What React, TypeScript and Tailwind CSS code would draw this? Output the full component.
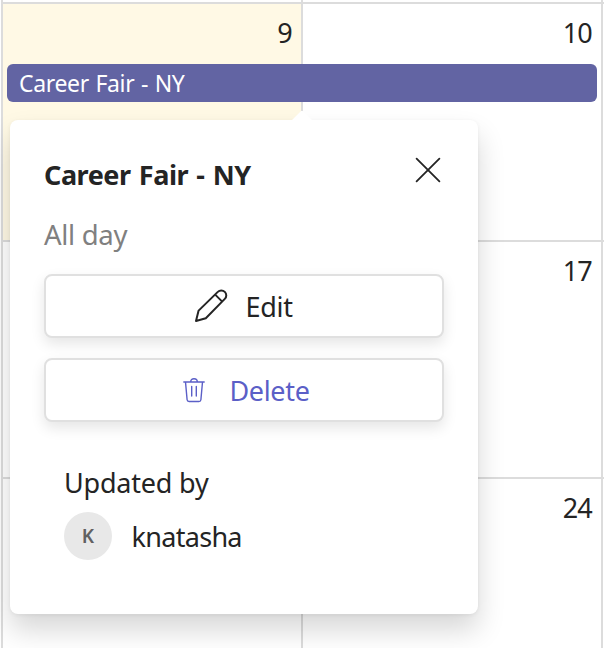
const days = [
  { left: '', right: '', height: 'h-[2px]', today: false },
  { left: '9', right: '10', height: 'h-[238px]', today: true },
  { left: '', right: '17', height: 'h-[237px]', today: false },
  { left: '', right: '24', height: 'h-[171px]', today: false },
];

function DayCell({ label, today, first }: { label: string; today?: boolean; first?: boolean }) {
  return (
    <div
      className={`h-full w-[300px] shrink-0 border-l-2 border-[#dcdcdc] pr-[9px] text-right text-[27px] leading-[58px] tracking-[-0.8px] ${
        first ? '' : 'border-t-2'
      } ${today ? 'bg-[#fff9e5]' : 'bg-white'}`}
    >
      {label}
    </div>
  );
}

function CloseIcon() {
  return (
    <svg width="26" height="26" viewBox="0 0 26 26" fill="none" stroke="#242424" strokeWidth="1.8" strokeLinecap="round">
      <path d="M1.6 1.6 24.4 24.4M24.4 1.6 1.6 24.4" />
    </svg>
  );
}

function PencilIcon() {
  return (
    <svg width="34" height="34" viewBox="0 0 34 34" fill="none" stroke="#242424" strokeWidth="2" strokeLinejoin="round">
      <path d="M2 32 4.6 21.6 23.8 2.9a4.9 4.9 0 0 1 7 0 4.9 4.9 0 0 1 0 7L11.8 29.2Z" />
      <path d="m21.2 5.6 7 7" />
    </svg>
  );
}

function TrashIcon() {
  return (
    <svg width="22" height="26" viewBox="0 0 22 26" fill="none" stroke="#5b5fc7" strokeWidth="1.4" strokeLinecap="round" strokeLinejoin="round">
      <path d="M.8 5H21.2M7.7 4.8C7.7 2.8 9 1.7 11 1.7s3.3 1.1 3.3 3.1M2.5 5l1.6 17.7a2 2 0 0 0 2 1.8h9.8a2 2 0 0 0 2-1.8L19.5 5" />
      <path d="M8.7 9.5V19M13.3 9.5V19" />
    </svg>
  );
}

const buttonClass =
  'flex h-16 w-[400px] items-center rounded-lg border-2 border-[#e0e0e0] bg-white text-[27px] shadow-[0_6px_14px_rgba(0,0,0,0.10)]';

export default function App() {
  return (
    <div className="relative h-[648px] w-[604px] overflow-hidden bg-white font-['Noto_Sans','Open_Sans',sans-serif] text-[#242424]">
      <div className="flex flex-col">
        {days.map((row, i) => (
          <div key={i} className={`flex pl-px ${row.height}`}>
            <DayCell label={row.left} today={row.today} first={i === 0} />
            <DayCell label={row.right} first={i === 0} />
            <DayCell label="" first={i === 0} />
          </div>
        ))}
      </div>

      <div className="absolute left-[7px] top-16 h-[38px] w-[590px] rounded-[6px] bg-[#6264a3] pl-3 text-[23px] leading-[39px] tracking-[-0.35px] [word-spacing:1px] text-white">
        <span>Career Fair - NY</span>
      </div>

      <section className="absolute left-[10px] top-[120px] h-[494px] w-[468px] rounded-lg bg-white px-[34px] shadow-[0_16px_28px_rgba(0,0,0,0.16),0_1px_4px_rgba(0,0,0,0.06)]">
        <svg className="absolute left-[282px] top-[-10px]" width="20" height="11" viewBox="0 0 20 11">
          <path d="M0 10 8.6 1.4Q10 0 11.4 1.4L20 10v1H0Z" fill="#fff" />
        </svg>
        <header className="flex justify-between pt-[35px]">
          <h2 className="text-[27px] font-bold leading-10 tracking-[-0.45px] [word-spacing:1.6px]">Career Fair - NY</h2>
          <button className="mr-[3px] mt-[2px] h-[26px]" aria-label="Close">
            <CloseIcon />
          </button>
        </header>
        <p className="pt-5 text-[27.5px] leading-10 tracking-[-0.3px] text-[#808080]">
          <span>All day</span>
        </p>
        <div className="mt-[19px] flex flex-col gap-5">
          <button className={`${buttonClass} pl-[148px]`}>
            <PencilIcon />
            <span className="ml-[17.5px] pt-[2px] tracking-[-0.3px]">Edit</span>
          </button>
          <button className={`${buttonClass} pl-[137px] text-[#5b5fc7]`}>
            <TrashIcon />
            <span className="ml-[24.5px] pt-[2px] tracking-[-0.35px]">Delete</span>
          </button>
        </div>
        <div className="pl-5 pt-[41px]">
          <p className="text-[27px] leading-10 tracking-[-0.2px]">
            <span>Updated by</span>
          </p>
          <div className="mt-[9px] flex items-center">
            <div className="flex h-12 w-12 items-center justify-center rounded-full bg-[#e8e8e8] text-[19px] font-semibold text-[#616161]">K</div>
            <span className="ml-[19.5px] pt-[2px] text-[27px] leading-[46px] tracking-[-0.7px]">knatasha</span>
          </div>
        </div>
      </section>
    </div>
  );
}
